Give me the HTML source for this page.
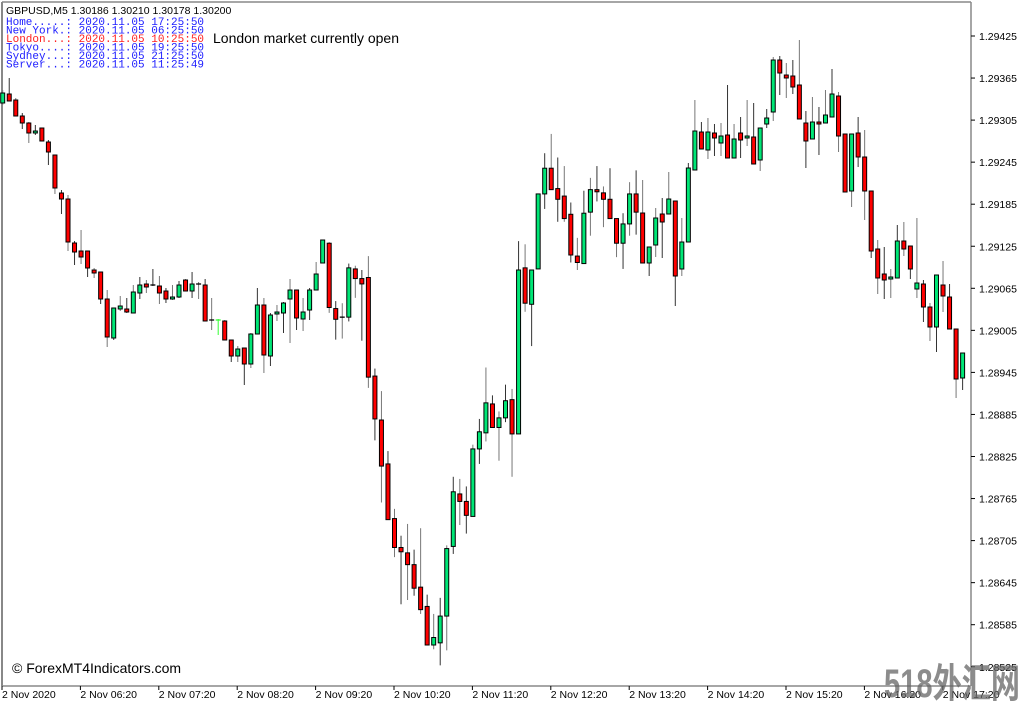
<!DOCTYPE html>
<html><head><meta charset="utf-8"><style>
html,body{margin:0;padding:0;background:#fff;width:1024px;height:705px;overflow:hidden}
svg{display:block}
</style></head><body>
<svg id="s" width="1024" height="705" xmlns="http://www.w3.org/2000/svg" font-family="Liberation Sans, sans-serif">
<rect x="0" y="0" width="1024" height="705" fill="#fff"/>
<line x1="2" y1="2" x2="971" y2="2" stroke="#888" stroke-width="1.5"/>
<line x1="2" y1="2" x2="2" y2="686" stroke="#888" stroke-width="2"/>
<line x1="971" y1="2" x2="971" y2="686" stroke="#888" stroke-width="1.5"/>
<line x1="2" y1="686" x2="971" y2="686" stroke="#888" stroke-width="1.5"/>
<g id="c"></g>
<g id="ax" font-size="10.5" fill="#000"></g>
<text x="6" y="14" font-size="10.5">GBPUSD,M5  1.30186 1.30210 1.30178 1.30200</text>
<g font-family="Liberation Mono, monospace" font-size="11" fill="#2020ff">
<text x="6" y="25">Home.....: 2020.11.05 17:25:50</text>
<text x="6" y="33.5">New York.: 2020.11.05 06:25:50</text>
<text x="6" y="42" fill="#ff2020">London...: 2020.11.05 10:25:50</text>
<text x="6" y="50.5">Tokyo....: 2020.11.05 19:25:50</text>
<text x="6" y="59">Sydney...: 2020.11.05 21:25:50</text>
<text x="6" y="67.5">Server...: 2020.11.05 11:25:49</text>
</g>
<text x="213" y="43" font-size="14" fill="#000">London market currently open</text>
<text x="12" y="673" font-size="14" fill="#000">© ForexMT4Indicators.com</text>
<text x="884" y="697" font-size="40" font-weight="bold" fill="#666" fill-opacity="0.75" textLength="136" lengthAdjust="spacingAndGlyphs" font-family="Liberation Sans, Noto Sans CJK SC, sans-serif">518外汇网</text>
</svg>
<script>
var D=[[103,93,90,105],[94,101,78,101],[100,116,98,116],[116,123,113,129],[123,133,122,143],[133,131,125,135],[128,141,128,141],[142,152,140,165],[155,188,155,194],[193,199,190,214],[199,242,195,251],[243,252,241,265],[251,257,230,264],[251,268,251,277],[270,273,268,278],[272,299,272,304],[299,337,290,347],[338,308,308,340],[309,306,296,311],[309,312,298,313],[313,292,285,313],[293,285,277,299],[284,287,280,293],[285,285,269,286],[286,293,276,304],[291,299,288,303],[299,297,285,300],[297,285,281,298],[280,291,279,291],[291,284,272,298],[284,284,282,299],[285,321,279,321],[320,320,298,330],[320,320,319,335,1],[321,340,320,340],[340,356,340,362],[356,349,346,362],[348,364,348,385],[364,334,333,368],[334,305,288,334],[305,355,298,373],[356,315,313,366],[314,312,305,321],[313,303,302,333],[299,290,279,343],[290,318,290,330],[319,312,298,331],[310,290,288,320],[290,274,262,290],[263,240,240,263],[235,295,234,300],[296,306,289,325],[304,304,291,324],[304,258,254,308],[259,268,256,286],[268,273,260,326],[267,360,247,370],[359,399,352,419],[400,443,373,477],[441,493,429,493],[492,519,483,528],[519,523,508,572],[524,535,497,568],[535,557,521,564],[556,577,501,581],[574,610,563,610],[610,603,581,614],[608,583,566,629],[583,520,517,615],[518,467,453,525],[469,476,455,498],[476,489,462,506],[490,427,423,490],[427,411,399,441],[412,384,351,420],[385,407,377,407],[407,398,392,438],[398,382,367,402],[381,413,371,453],[413,260,233,413],[258,291,236,299],[292,260,260,331],[259,189,189,259],[189,165,151,203],[165,185,133,185],[184,194,155,215],[191,212,163,215],[208,246,197,253],[247,253,230,260],[254,207,186,254],[206,185,174,228],[185,187,163,196],[188,194,182,220],[194,212,165,212],[212,235,212,248],[235,217,207,259],[217,189,178,228],[189,206,167,227],[213,263,180,263],[263,247,247,276],[245,218,208,257],[214,222,198,258],[214,199,172,214],[201,276,201,306],[269,242,218,276],[242,168,163,242],[170,131,100,170],[132,149,122,149],[150,132,118,159],[133,138,124,156],[143,136,123,156],[135,158,85,158],[158,139,124,158],[133,140,117,158],[138,136,100,146],[137,164,103,164],[160,128,128,171],[124,118,109,128],[112,60,57,121],[60,73,56,95],[75,78,63,98],[76,87,60,94],[85,119,40,119],[123,141,111,168],[139,122,97,139],[122,124,107,155],[123,115,90,123],[117,94,69,117],[96,136,92,152],[134,192,134,192],[191,134,134,207],[133,157,117,167],[157,191,130,220],[191,251,191,258],[249,278,240,294],[274,280,247,299],[279,277,269,298],[278,241,225,278],[241,249,222,256],[246,269,246,279],[289,283,218,298],[284,307,280,322],[307,327,303,341],[327,275,275,352],[285,296,261,312],[297,329,284,329],[329,379,329,398],[378,353,353,390],[354,346,340,356]];
for(var i=50;i<=97;i++){for(var k=0;k<4;k++){D[i][k]=120+(D[i][k]-120)*3/2.8;}}
var g=document.getElementById('c'),h='';
D.forEach(function(d,i){var x=2.7+6.53*i;var o=d[0],c=d[1];var t=Math.min(o,c),b=Math.max(o,c);var up=c<o;
if(x>969)return;
h+='<line x1="'+x+'" y1="'+d[2]+'" x2="'+x+'" y2="'+d[3]+'" stroke="'+(d[4]?'#33ff33':(i%2?'#333':'#777'))+'" stroke-width="1"/>';
if(b-t<1.5){h+='<line x1="'+(x-2.5)+'" y1="'+t+'" x2="'+(x+2.5)+'" y2="'+t+'" stroke="'+(d[4]?'#33ff33':'#000')+'" stroke-width="1.3"/>';}
else h+='<rect x="'+(x-2)+'" y="'+t+'" width="4" height="'+(b-t)+'" fill="'+(up?'#00e676':'#ff0000')+'" stroke="#000" stroke-width="1"/>';});
g.innerHTML=h;
var a=document.getElementById('ax'),s='';
var P=['1.29425','1.29365','1.29305','1.29245','1.29185','1.29125','1.29065','1.29005','1.28945','1.28885','1.28825','1.28765','1.28705','1.28645','1.28585','1.28525'];
P.forEach(function(p,i){var y=36+42.05*i;s+='<line x1="971" y1="'+y+'" x2="975" y2="'+y+'" stroke="#000"/><text x="979" y="'+(y+4)+'">'+p+'</text>';});
var T=['2 Nov 2020','2 Nov 06:20','2 Nov 07:20','2 Nov 08:20','2 Nov 09:20','2 Nov 10:20','2 Nov 11:20','2 Nov 12:20','2 Nov 13:20','2 Nov 14:20','2 Nov 15:20','2 Nov 16:20','2 Nov 17:20'];
T.forEach(function(t,i){var x=2+78.4*i;s+='<line x1="'+x+'" y1="686" x2="'+x+'" y2="690" stroke="#000"/><text x="'+x+'" y="698">'+t+'</text>';});
a.innerHTML=s;
</script>
</body></html>
